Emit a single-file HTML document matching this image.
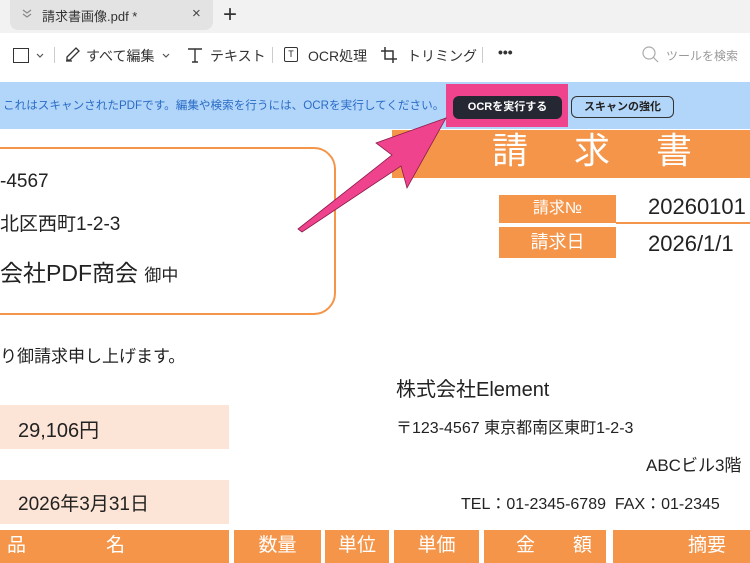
<!DOCTYPE html>
<html><head><meta charset="utf-8"><style>
*{margin:0;padding:0;box-sizing:border-box}
body{width:750px;height:563px;overflow:hidden;background:#fff;font-family:"Liberation Sans","Noto Sans CJK JP",sans-serif;position:relative;color:#222}
.a{position:absolute;white-space:nowrap}
.or{background:#f4954a;color:#fff}
.pk{background:#fce4d6}
.n{font-family:"Liberation Sans Narrow","Liberation Sans","Noto Sans CJK JP",sans-serif}
</style></head><body>
<div class="a" style="left:0;top:0;width:750px;height:33px;background:#f2f2f2"></div>
<div class="a" style="left:10px;top:0;width:203px;height:30px;background:#e3e3e3;border-radius:0 0 8px 8px"></div>
<svg class="a" style="left:21px;top:8px" width="12" height="12"><path d="M2 2l4 3 4-3M2 6l4 3 4-3" fill="none" stroke="#888" stroke-width="1.2"/></svg>
<div class="a" style="left:42px;top:6px;font-size:13px;color:#333">請求書画像.pdf *</div>
<div class="a" style="left:192px;top:5px;font-size:15px;color:#444">×</div>
<div class="a" style="left:223px;top:1px;font-size:24px;color:#333;font-weight:300">+</div>
<div class="a" style="left:0;top:33px;width:750px;height:48px;background:#fff"></div>
<div class="a" style="left:13px;top:48px;width:16px;height:15px;border:1.5px solid #333"></div>
<svg class="a" style="left:35px;top:52px" width="10" height="8"><path d="M2 2l3 3 3-3" fill="none" stroke="#555" stroke-width="1.2"/></svg>
<div class="a" style="left:54px;top:47px;width:1px;height:16px;background:#ccc"></div>
<svg class="a" style="left:63px;top:46px" width="18" height="18"><path d="M3 15h6M4 11l9-9 3 3-9 9H4z" fill="none" stroke="#333" stroke-width="1.3"/></svg>
<div class="a" style="left:86px;top:46px;font-size:14px;color:#333">すべて編集</div>
<svg class="a" style="left:161px;top:52px" width="10" height="8"><path d="M2 2l3 3 3-3" fill="none" stroke="#555" stroke-width="1.2"/></svg>
<svg class="a" style="left:186px;top:46px" width="18" height="18"><path d="M2 3h14M9 3v13M6 16h6" fill="none" stroke="#333" stroke-width="1.4"/></svg>
<div class="a" style="left:210px;top:46px;font-size:14px;color:#333">テキスト</div>
<div class="a" style="left:272px;top:47px;width:1px;height:16px;background:#ccc"></div>
<div class="a" style="left:284px;top:47px;width:14px;height:15px;border:1.5px solid #333;border-radius:2px;font-size:9px;text-align:center;line-height:12px">T</div>
<div class="a" style="left:308px;top:46px;font-size:14px;color:#333">OCR処理</div>
<svg class="a" style="left:380px;top:46px" width="18" height="18"><path d="M5 1v12h12M1 5h12v12" fill="none" stroke="#333" stroke-width="1.5"/></svg>
<div class="a" style="left:407px;top:46px;font-size:14px;color:#333">トリミング</div>
<div class="a" style="left:482px;top:47px;width:1px;height:16px;background:#ccc"></div>
<div class="a" style="left:498px;top:44px;font-size:14px;font-weight:bold;color:#333">•••</div>
<svg class="a" style="left:642px;top:46px" width="18" height="18"><circle cx="7" cy="7" r="6" fill="none" stroke="#aaa" stroke-width="1.2"/><path d="M11 11l5 5" stroke="#aaa" stroke-width="1.2"/></svg>
<div class="a" style="left:666px;top:47px;font-size:12px;color:#999">ツールを検索</div>
<div class="a" style="left:0;top:82px;width:750px;height:47px;background:#b2d6fa"></div>
<div class="a" style="left:3px;top:97px;font-size:11.6px;color:#2a6cc6">これはスキャンされたPDFです。編集や検索を行うには、OCRを実行してください。</div>
<div class="a" style="left:446px;top:84px;width:122px;height:43px;background:#f0438e"></div>
<div class="a" style="left:453px;top:96px;width:109px;height:23px;background:#252833;border-radius:6px;color:#fff;font-size:11px;font-weight:bold;text-align:center;line-height:23px">OCRを実行する</div>
<div class="a" style="left:571px;top:96px;width:103px;height:22px;border:1px solid #333;border-radius:6px;color:#222;font-size:11px;font-weight:bold;text-align:center;line-height:20px">スキャンの強化</div>
<div class="a or" style="left:392px;top:130px;width:358px;height:48px;font-size:36px;line-height:42px;padding-left:100px;letter-spacing:46px">請求書</div>
<div class="a" style="left:-30px;top:147px;width:366px;height:168px;border:2.5px solid #f4954a;border-radius:22px"></div>
<div class="a" style="left:0;top:171px;font-size:19px">-4567</div>
<div class="a" style="left:0;top:209px;font-size:19px">北区西町1-2-3</div>
<div class="a" style="left:0;top:254px;font-size:23px">会社PDF商会 <span style="font-size:17px">御中</span></div>
<div class="a" style="left:0;top:342px;font-size:17px">り御請求申し上げます。</div>
<div class="a or" style="left:499px;top:195px;width:117px;height:28px;font-size:16px;text-align:center;line-height:27px">請求№</div>
<div class="a or" style="left:499px;top:227px;width:117px;height:31px;font-size:18px;text-align:center;line-height:30px">請求日</div>
<div class="a" style="left:616px;top:222px;width:134px;height:2px;background:#f4954a"></div>
<div class="a n" style="left:648px;top:194px;font-size:22px">20260101</div>
<div class="a n" style="left:648px;top:231px;font-size:22px">2026/1/1</div>
<div class="a" style="left:396px;top:373px;font-size:20px">株式会社Element</div>
<div class="a pk" style="left:0;top:405px;width:229px;height:44px"></div>
<div class="a n" style="left:18px;top:414px;font-size:20px">29,106円</div>
<div class="a" style="left:396px;top:414px;font-size:16px">〒123-4567 東京都南区東町1-2-3</div>
<div class="a n" style="left:646px;top:451px;font-size:17px">ABCビル3階</div>
<div class="a pk" style="left:0;top:480px;width:229px;height:44px"></div>
<div class="a n" style="left:18px;top:489px;font-size:19px">2026年3月31日</div>
<div class="a n" style="left:461px;top:490px;font-size:16px">TEL：01-2345-6789 &nbsp;FAX：01-2345</div>
<div class="a or n" style="left:0;top:530px;width:229px;height:33px;font-size:19px;line-height:31px;padding-left:7px">品<span style="margin-left:80px">名</span></div>
<div class="a or n" style="left:234px;top:530px;width:87px;height:33px;font-size:19px;line-height:31px;text-align:center">数量</div>
<div class="a or n" style="left:325px;top:530px;width:64px;height:33px;font-size:19px;line-height:31px;text-align:center">単位</div>
<div class="a or n" style="left:394px;top:530px;width:85px;height:33px;font-size:19px;line-height:31px;text-align:center">単価</div>
<div class="a or n" style="left:484px;top:530px;width:122px;height:33px;font-size:19px;line-height:31px;padding-left:32px">金<span style="margin-left:38px">額</span></div>
<div class="a or n" style="left:613px;top:530px;width:137px;height:33px;font-size:19px;line-height:31px;padding-left:75px">摘要</div>
<svg class="a" style="left:0;top:0" width="750" height="563"><polygon points="298,229 392,155 376,143 446,118 407,188 401,166 302,232" fill="#f0438e" stroke="#8a1d4a" stroke-width="0.8"/></svg>
</body></html>
